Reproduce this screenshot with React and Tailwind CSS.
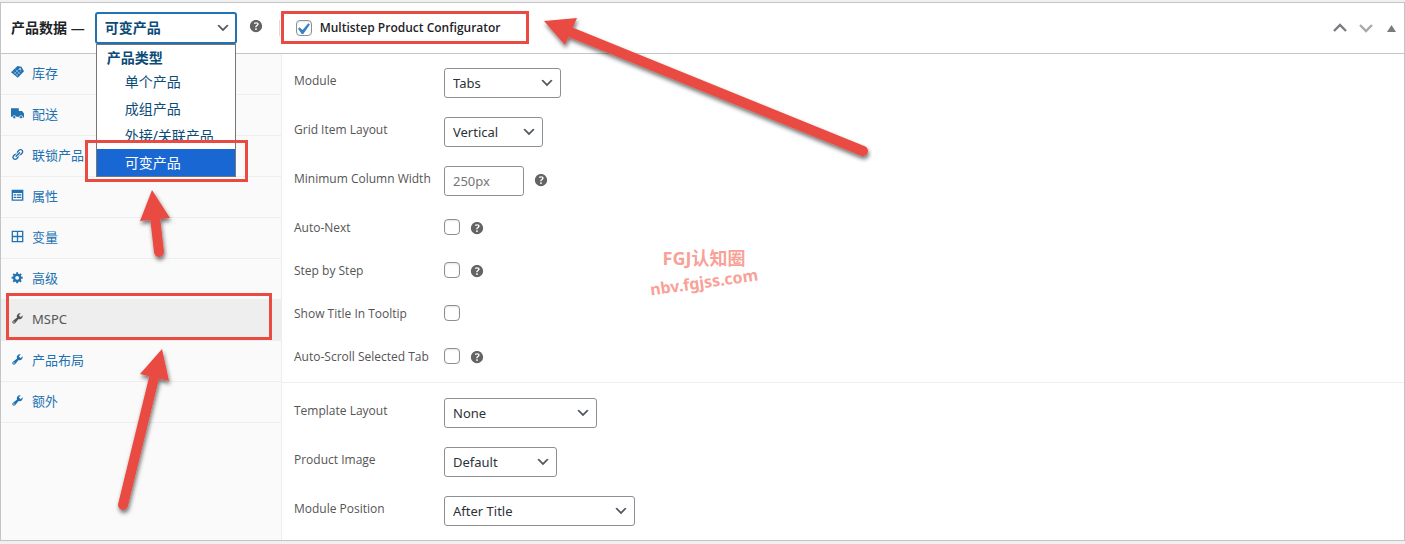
import React, { useState } from 'react';

const TABS = [
    { id: 'inventory', label: '库存', icon: 'tag' },
    { id: 'shipping', label: '配送', icon: 'truck' },
    { id: 'linked', label: '联锁产品', icon: 'link' },
    { id: 'attributes', label: '属性', icon: 'feedback' },
    { id: 'variations', label: '变量', icon: 'table' },
    { id: 'advanced', label: '高级', icon: 'gear' },
    { id: 'mspc', label: 'MSPC', icon: 'wrench' },
    { id: 'layout', label: '产品布局', icon: 'wrench' },
    { id: 'extra', label: '额外', icon: 'wrench' },
];

const PRODUCT_TYPES = ['单个产品', '成组产品', '外接/关联产品', '可变产品'];

const ICONS = {
    tag: (
        <>
            <path d="M0 9.500 10 0l6 1 4 7-9.500 10z" />
            <circle cx="14" cy="4.500" r="1.300" fill="#fafafa" />
            <path d="M4 8.500l7 7M7 5.500l7 7M5 12l8-8M8 14.500l8-8" stroke="#fafafa" strokeWidth=".6" />
        </>
    ),
    truck: (
        <>
            <path d="M0 2h12v13H0zM12 6h5l3 4v6h-8z" />
            <circle cx="5" cy="15.500" r="2.400" stroke="#fafafa" />
            <circle cx="15.500" cy="15.500" r="2.400" stroke="#fafafa" />
        </>
    ),
    link: <path d="M17.74 2.76c1.68 1.69 1.68 4.41 0 6.1l-1.53 1.52c-1.12 1.12-2.7 1.47-4.14 1.09l2.62-2.61.76-.77.76-.76c.84-.84.84-2.2 0-3.04-.84-.85-2.2-.85-3.04 0l-.77.76-3.38 3.38c-.37-1.44-.02-3.02 1.1-4.14l1.52-1.53c1.69-1.68 4.42-1.68 6.1 0zM8.59 13.43l5.34-5.34c.42-.42.42-1.1 0-1.52-.44-.43-1.13-.39-1.53 0l-5.33 5.34c-.42.42-.42 1.1 0 1.52.44.43 1.13.39 1.52 0zm-.76 2.29l4.14-4.15c.38 1.44.03 3.02-1.09 4.14l-1.52 1.53c-1.69 1.68-4.41 1.68-6.1 0-1.68-1.68-1.68-4.42 0-6.1l1.53-1.52c1.12-1.12 2.7-1.47 4.14-1.1l-4.14 4.15c-.85.84-.85 2.2 0 3.05.84.84 2.2.84 3.04 0z" />,
    feedback: <path fillRule="evenodd" d="M1 1h18v17H1zM3 6v10h14V6zM4 8h4v2H4zM9 8h7v2H9zM4 12h4v2H4zM9 12h7v2H9z" />,
    table: <path fillRule="evenodd" d="M1 1h18v18H1zM3 3v6h6V3zM11 3v6h6V3zM3 11v6h6v-6zM11 11v6h6v-6z" />,
    gear: <path d="M18 12h-2.18c-.17.7-.44 1.35-.81 1.93l1.54 1.54-2.1 2.1-1.54-1.54c-.58.36-1.23.63-1.91.79V19H8v-2.18c-.68-.16-1.33-.43-1.91-.79l-1.54 1.54-2.12-2.12 1.54-1.54c-.36-.58-.63-1.23-.79-1.91H1V9.03h2.17c.16-.7.44-1.35.8-1.94L2.43 5.55l2.1-2.1 1.54 1.54c.58-.37 1.24-.64 1.93-.81V2h3v2.18c.68.16 1.33.43 1.91.79l1.54-1.54 2.12 2.12-1.54 1.54c.36.59.64 1.24.8 1.94H18V12zm-8.5 1.5c1.66 0 3-1.34 3-3s-1.34-3-3-3-3 1.34-3 3 1.34 3 3 3z" />,
    wrench: <path d="M16.68 9.77c-1.34 1.34-3.3 1.67-4.95.99l-5.41 6.52c-.99.99-2.59.99-3.58 0s-.99-2.59 0-3.57l6.52-5.42c-.68-1.65-.35-3.61.99-4.95 1.28-1.28 3.12-1.62 4.72-1.06l-2.89 2.89 2.82 2.82 2.86-2.87c.53 1.58.18 3.39-1.08 4.65zM3.81 16.21c.4.39 1.04.39 1.43 0 .4-.4.4-1.04 0-1.43-.39-.4-1.03-.4-1.43 0-.39.39-.39 1.03 0 1.43z" />,
};

const TabIcon = ({ name }) => (
    <svg viewBox="0 0 20 20" fill="currentColor" className="mr-2 mb-[3px] h-[13px] w-[13px] shrink-0" aria-hidden="true">
        {ICONS[name]}
    </svg>
);

const HelpTip = () => (
    <button type="button" aria-label="Help" className="h-4 w-4 shrink-0 text-[#646464]">
        <svg viewBox="2 2 16 16" fill="currentColor" className="h-[14px] w-[14px]" aria-hidden="true">
            <path d="M17 10c0-3.87-3.14-7-7-7-3.87 0-7 3.13-7 7s3.13 7 7 7c3.86 0 7-3.13 7-7zm-6.3 1.48H9.14v-.43c0-.38.08-.7.24-.98s.46-.57.88-.89c.41-.29.68-.53.81-.71.14-.18.2-.39.2-.62 0-.25-.09-.44-.28-.58-.19-.13-.45-.19-.79-.19-.58 0-1.25.19-2 .57l-.64-1.28c.87-.49 1.8-.74 2.77-.74.81 0 1.45.2 1.92.58.48.39.71.91.71 1.55 0 .43-.09.8-.29 1.11-.19.32-.57.67-1.11 1.06-.38.28-.61.49-.71.63-.1.15-.15.34-.15.57v.35zm-1.47 2.74c-.18-.17-.27-.42-.27-.73 0-.33.08-.58.26-.75s.43-.25.77-.25c.32 0 .57.09.75.26s.27.42.27.74c0 .3-.09.55-.27.72-.18.18-.43.27-.75.27-.33 0-.58-.09-.76-.26z" />
        </svg>
    </button>
);

const SelectArrow = () => (
    <svg viewBox="0 0 20 20" fill="#50575e" className="pointer-events-none absolute top-1/2 right-1.5 h-4 w-4 -translate-y-1/2" aria-hidden="true">
        <path d="M5 6l5 5 5-5 2 1-7 7-7-7 2-1z" />
    </svg>
);

const Checkbox = ({ id, checked, onChange }) => (
    <span className="relative flex h-4 w-4 shrink-0">
        <input
            id={id}
            type="checkbox"
            checked={checked}
            onChange={onChange}
            className="h-4 w-4 appearance-none rounded border border-[#8c8f94] bg-white shadow-[inset_0_1px_2px_rgba(0,0,0,0.1)]"
        />
        {checked && (
            <svg viewBox="4 2 14 14" fill="#3582c4" className="pointer-events-none absolute inset-0 h-4 w-4" aria-hidden="true">
                <path d="M14.83 4.89l1.34.94-5.81 8.38H9.02L5.78 9.67l1.34-1.25 2.57 2.4z" />
            </svg>
        )}
    </span>
);

const SelectRow = ({ id, label, value, width }) => (
    <div className="flex h-[30px]">
        <label htmlFor={id} className="w-[150px] pt-1 font-['Open_Sans',sans-serif] text-xs leading-[18px] text-[#555]">{label}</label>
        <div className={`relative ${width}`}>
            <select id={id} className="h-[30px] w-full appearance-none rounded-[3px] border border-[#8c8f94] bg-white pt-0.5 pr-6 pl-2 text-[13px] text-[#2c3338]">
                <option>{value}</option>
            </select>
            <SelectArrow />
        </div>
    </div>
);

const CheckboxRow = ({ id, label, help }) => {
    const [checked, setChecked] = useState(false);

    return (
        <div className="flex h-[18px] items-center">
            <label htmlFor={id} className="w-[150px] pt-0.5 font-['Open_Sans',sans-serif] text-xs leading-[18px] text-[#555]">{label}</label>
            <Checkbox id={id} checked={checked} onChange={() => setChecked(!checked)} />
            {help && <span className="ml-2.5 flex pt-0.5"><HelpTip /></span>}
        </div>
    );
};

const ProductTypeSelect = ({ productType, setProductType }) => (
    <div className="relative ml-2.5 w-[142px]">
        <select
            id="product-type"
            aria-label="产品类型"
            value={productType}
            onChange={(e) => setProductType(e.target.value)}
            className="block h-8 w-full appearance-none rounded-[3px] border-2 border-[#2271b1] bg-white pr-6 pl-2 text-sm font-semibold text-[#0a4b78] outline-none"
        >
            {PRODUCT_TYPES.map(type => <option key={type}>{type}</option>)}
        </select>
        <SelectArrow />
        <div className="absolute top-full left-px z-10 w-[140px] border border-[#767676] bg-white pt-0.5 text-sm text-[#0a4b78]">
            <p className="pl-2.5 leading-[21px] font-bold">产品类型</p>
            <ul role="listbox" aria-label="产品类型">
                {PRODUCT_TYPES.map(type => (
                    <li
                        key={type}
                        role="option"
                        aria-selected={type === productType}
                        onClick={() => setProductType(type)}
                        className={`h-[27px] pl-7 leading-[27px] ${type === productType ? 'bg-[#1967d2] text-white' : ''}`}
                    >
                        {type}
                    </li>
                ))}
            </ul>
        </div>
    </div>
);

// Red boxes and arrows that point out the steps
const Annotations = () => (
    <svg width="900" height="544" className="pointer-events-none absolute top-0 left-0 z-20" aria-hidden="true">
        <defs>
            <filter id="arrow-shadow" x="-20%" y="-20%" width="140%" height="140%">
                <feDropShadow dx="1" dy="3" stdDeviation="2" floodColor="#000" floodOpacity="0.55" />
            </filter>
        </defs>
        <g fill="none" stroke="#e94b43" strokeWidth="3">
            <rect x="86.500" y="141.500" width="160" height="39" />
            <rect x="282.500" y="12.500" width="245" height="30" />
            <rect x="7.500" y="294.500" width="263" height="44" />
        </g>
        <g fill="#e94b43" stroke="#e94b43" strokeLinecap="round" filter="url(#arrow-shadow)">
            <path stroke="none" d="M544 21 577 18 565 45z" />
            <path strokeWidth="10" d="M570 32 863 151" />
            <path stroke="none" d="M152 190 170 218 140 221z" />
            <path strokeWidth="10" d="M155 217 159 252" />
            <path stroke="none" d="M162 349 169 381 140 374z" />
            <path strokeWidth="10" d="M154 378 123 505" />
        </g>
    </svg>
);

const Watermark = () => (
    <div className="pointer-events-none absolute top-[248px] left-[648px] z-20 w-28 text-center font-bold text-[#f9a197]">
        <p className="h-5 text-lg leading-5">FGJ认知圈</p>
        <p className="mt-1 -rotate-8 text-base leading-5">nbv.fgjss.com</p>
    </div>
);

export default function App() {
    const [productType, setProductType] = useState('可变产品');
    const [activeTab, setActiveTab] = useState('mspc');
    const [mspcEnabled, setMspcEnabled] = useState(true);

    return (
        <div className="relative min-h-screen bg-[#f0f0f1] pt-0.5 pb-[3px] font-['Noto_Sans','Noto_Sans_CJK_SC',sans-serif]">
            <section className="border border-[#c3c4c7] bg-white">
                <header className="flex h-[51px] items-center border-b border-[#c3c4c7] pl-2.5 text-[#1d2327]">
                    <h2 className="text-sm font-semibold whitespace-nowrap">产品数据 —</h2>
                    <ProductTypeSelect productType={productType} setProductType={setProductType} />
                    <span className="ml-3 flex pb-1"><HelpTip /></span>
                    <span className="ml-3.5 h-4 w-px bg-[#dcdcde]" />
                    <label htmlFor="mspc-enabled" className="ml-4 flex items-center gap-2 font-['Open_Sans',sans-serif] text-xs font-semibold whitespace-nowrap">
                        <Checkbox id="mspc-enabled" checked={mspcEnabled} onChange={() => setMspcEnabled(!mspcEnabled)} />
                        Multistep Product Configurator
                    </label>
                    <div className="ml-auto flex items-center gap-3 pr-2 text-[#787c82]">
                        <button type="button" aria-label="Move up">
                            <svg viewBox="0 0 14 10" fill="none" stroke="currentColor" strokeWidth="2.4" className="h-2.5 w-3.5"><path d="M1 8l6-6 6 6" /></svg>
                        </button>
                        <button type="button" aria-label="Move down" className="text-[#a7aaad]">
                            <svg viewBox="0 0 14 10" fill="none" stroke="currentColor" strokeWidth="2.4" className="h-2.5 w-3.5"><path d="M1 2l6 6 6-6" /></svg>
                        </button>
                        <button type="button" aria-label="Toggle panel" className="ml-0.5">
                            <svg viewBox="0 0 9 7" fill="currentColor" className="h-[7px] w-[9px]"><path d="M4.500 0l4.500 7H0z" /></svg>
                        </button>
                    </div>
                </header>

                <div className="flex">
                    <nav className="w-[281px] shrink-0 border-r border-[#eee] bg-[#fafafa] text-[13px]">
                        {TABS.map(tab => (
                            <a
                                key={tab.id}
                                href={`#${tab.id}`}
                                onClick={() => setActiveTab(tab.id)}
                                className={`flex h-[41px] items-center border-b border-[#eee] pl-2.5 ${activeTab === tab.id ? 'bg-[#eee] text-[#555]' : 'text-[#2271b1]'}`}
                            >
                                <TabIcon name={tab.icon} />
                                {tab.label}
                            </a>
                        ))}
                    </nav>

                    <form className="min-w-0 flex-1">
                        <div className="flex flex-col gap-[19px] px-3 pt-3.5">
                            <SelectRow id="module" label="Module" value="Tabs" width="w-[117px]" />
                            <SelectRow id="grid-layout" label="Grid Item Layout" value="Vertical" width="w-[99px]" />
                            <div className="flex h-[30px]">
                                <label htmlFor="min-width" className="w-[150px] pt-1 font-['Open_Sans',sans-serif] text-xs leading-[18px] text-[#555]">Minimum Column Width</label>
                                <input id="min-width" type="text" placeholder="250px" className="w-20 rounded-[3px] border border-[#8c8f94] bg-white px-2 pt-0.5 text-[13px] placeholder:text-[#757575]" />
                                <span className="ml-2.5 flex pt-1.5"><HelpTip /></span>
                            </div>
                        </div>
                        <div className="flex flex-col gap-[25px] border-b border-[#eee] px-3 pt-[22px] pb-[17px]">
                            <CheckboxRow id="auto-next" label="Auto-Next" help />
                            <CheckboxRow id="step-by-step" label="Step by Step" help />
                            <CheckboxRow id="title-tooltip" label="Show Title In Tooltip" />
                            <CheckboxRow id="auto-scroll" label="Auto-Scroll Selected Tab" help />
                        </div>
                        <div className="flex flex-col gap-[19px] px-3 pt-[15px] pb-3.5">
                            <SelectRow id="template-layout" label="Template Layout" value="None" width="w-[153px]" />
                            <SelectRow id="product-image" label="Product Image" value="Default" width="w-[113px]" />
                            <SelectRow id="module-position" label="Module Position" value="After Title" width="w-[191px]" />
                        </div>
                    </form>
                </div>
            </section>
            <Watermark />
            <Annotations />
        </div>
    );
}
